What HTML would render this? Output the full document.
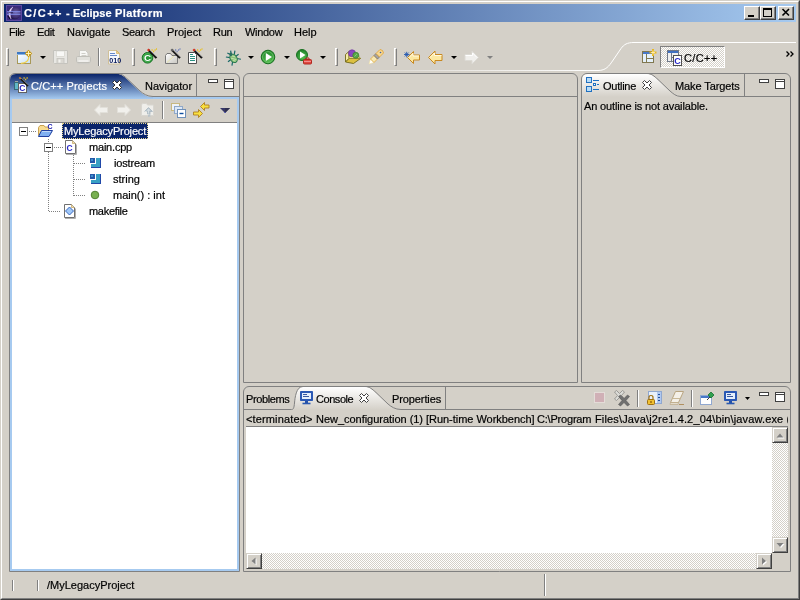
<!DOCTYPE html>
<html><head><meta charset="utf-8"><title>C/C++ - Eclipse Platform</title>
<style>
*{margin:0;padding:0;box-sizing:border-box}
html,body{width:800px;height:600px;overflow:hidden;background:#d4d0c8}
body{position:relative;font-family:"Liberation Sans",sans-serif;font-size:11px;color:#000;line-height:13px}
.a{position:absolute;white-space:nowrap}
div.a{will-change:transform;-webkit-text-stroke:.2px}
svg{position:absolute;overflow:visible}
.frame{left:0;top:0;width:800px;height:600px;border-style:solid;border-width:1px;border-color:#d4d0c8 #404040 #404040 #d4d0c8}
.frame2{left:1px;top:1px;width:798px;height:598px;border-style:solid;border-width:1px;border-color:#fff #808080 #808080 #fff}
.title{left:4px;top:4px;width:792px;height:18px;background:linear-gradient(90deg,#0a246a,#a6caf0)}
.ttext{left:24px;top:6px;color:#fff;font-weight:bold;font-size:11px;letter-spacing:.45px;line-height:14px}
.wbtn{width:16px;height:14px;top:6px;background:#d4d0c8;border-style:solid;border-width:1px;border-color:#fff #404040 #404040 #fff;box-shadow:inset -1px -1px 0 #808080}
.menu{top:26px;line-height:13px}
.sep{width:2px;height:18px;top:48px;border-left:1px solid #fff;border-right:1px solid #808080}
.hand{width:3px;height:18px;top:48px;border-style:solid;border-width:1px;border-color:#fff #808080 #808080 #fff}
.panel{border:1px solid #808080;border-radius:6px 6px 0 0}
.dd{width:0;height:0;border-style:solid;border-width:3px 3px 0 3px;border-color:#000 transparent transparent transparent;top:56px}
.sbtrack{background-color:#fff;background-image:conic-gradient(#d4d0c8 25%,#fff 0 50%,#d4d0c8 0 75%,#fff 0);background-size:2px 2px}
.sbbtn{width:16px;height:16px;background:#d4d0c8;border-style:solid;border-width:1px;border-color:#d4d0c8 #404040 #404040 #d4d0c8;box-shadow:inset 1px 1px 0 #fff,inset -1px -1px 0 #808080}
</style></head><body>
<div class="a frame"></div><div class="a frame2"></div>
<div class="a title"></div>
<div class="a ttext" style="letter-spacing:1.4px">C/C++</div><div class="a ttext" style="left:65.500px">-</div><div class="a ttext" style="left:72.500px;letter-spacing:0">Eclipse</div><div class="a ttext" style="left:114.500px;letter-spacing:.4px">Platform</div>
<div class="a wbtn" style="left:744px"></div>
<div class="a wbtn" style="left:760px"></div>
<div class="a wbtn" style="left:778px"></div>
<div class="a menu" style="left:9.300px;letter-spacing:-.5px">File</div>
<div class="a menu" style="left:36.800px;letter-spacing:-.4px">Edit</div>
<div class="a menu" style="left:67px">Navigate</div>
<div class="a menu" style="left:122px;letter-spacing:-.35px">Search</div>
<div class="a menu" style="left:167px">Project</div>
<div class="a menu" style="left:213px;letter-spacing:-.3px">Run</div>
<div class="a menu" style="left:245px;letter-spacing:-.3px">Window</div>
<div class="a menu" style="left:294px">Help</div>
<svg style="left:6px;top:5px" width="16" height="16" viewBox="0 0 16 16"><defs><radialGradient id="ec" cx=".6" cy=".45" r=".6"><stop offset="0" stop-color="#6c5c9c"/><stop offset=".7" stop-color="#3c2c70"/><stop offset="1" stop-color="#181038"/></radialGradient></defs><rect width="16" height="16" fill="#3a2a7c"/><rect x=".5" y=".5" width="15" height="15" fill="none" stroke="#5a48a0"/><circle cx="8.500" cy="8" r="6.300" fill="url(#ec)"/><path d="M7 2C2.500 4 1.500 10.500 5 14C3.800 10 4.200 5 7 2z" fill="#f4e4ff" stroke="#e0c8f8" stroke-width=".5"/><path d="M2 11l2 3" stroke="#100828" stroke-width="1.200"/><path d="M1 6.800h13.500M1 9.200h13.500" stroke="#8898f8" stroke-width="1"/><path d="M3 7.700h4" stroke="#201848" stroke-width=".8"/></svg>
<svg style="left:740px;top:4px" width="60" height="18" viewBox="740 4 60 18"><rect x="748" y="15" width="6" height="2" fill="#000"/><rect x="763.500" y="9" width="8" height="7.500" fill="none" stroke="#000"/><rect x="763" y="8" width="9" height="2" fill="#000"/><path d="M782.500 9l6.500 6.500M789 9l-6.500 6.500" stroke="#000" stroke-width="1.600"/></svg>
<!--perspective bar-->
<svg style="left:240px;top:40px" width="560" height="34" viewBox="240 40 560 34"><defs><linearGradient id="fade" x1="320" y1="0" x2="600" y2="0" gradientUnits="userSpaceOnUse"><stop offset="0" stop-color="#d4d0c8"/><stop offset="1" stop-color="#fff"/></linearGradient></defs>
<rect x="320" y="70" width="279" height="1" fill="url(#fade)"/>
<path d="M598 70.500C606 70.500 609 66 612.500 61L621 48.500C624 44.500 627 42.500 634 42.500H796" fill="none" stroke="#fff" stroke-width="1"/>
<rect x="660" y="46" width="65" height="22" fill="#fff"/>
<path d="M786.500 51.500l2.500 2.500-2.500 2.500M790.500 51.500l2.500 2.500-2.500 2.500" fill="none" stroke="#000" stroke-width="1.300"/>
</svg>
<div class="a sbtrack" style="left:660px;top:46px;width:65px;height:22px;border-style:solid;border-width:1px;border-color:#808080 #fff #fff #808080"></div>
<svg style="left:641px;top:49px" width="16" height="16" viewBox="0 0 16 16"><rect x="1.500" y="2.500" width="11" height="11" fill="#e4f0fa" stroke="#807850"/><rect x="2" y="3" width="10" height="2" fill="#4878c8"/><path d="M5.500 5v8M5.500 9.500h7" stroke="#807850"/><path d="M12 0v7M8.500 3.500h7" stroke="#e8b820" stroke-width="2"/><path d="M12 1.500v4M10 3.500h4" stroke="#fff4c0" stroke-width=".8"/></svg>
<svg style="left:666px;top:49px" width="16" height="16" viewBox="0 0 16 16"><rect x="1.500" y="1.500" width="11" height="11" fill="#f0f0f0" stroke="#707888"/><rect x="2" y="2" width="10" height="2" fill="#4070c0"/><path d="M5.500 4v8M5.500 8.500h7" stroke="#707888"/><rect x="7.500" y="6.500" width="8" height="10" fill="#fff" stroke="#505050"/><text x="8.300" y="14.800" font-family="Liberation Sans,sans-serif" font-size="9" font-weight="bold" fill="#2828c8">C</text></svg>
<div class="a" style="left:683.500px;top:52px;letter-spacing:.35px">C/C++</div>

<div class="a hand" style="left:6px"></div>
<svg style="left:17px;top:49px" width="16" height="16" viewBox="0 0 16 16"><defs><linearGradient id="nw" x1="0" y1="0" x2="1" y2="1"><stop offset="0" stop-color="#fff"/><stop offset="1" stop-color="#c4e0f8"/></linearGradient></defs><rect x=".5" y="5.500" width="13" height="9" fill="url(#nw)" stroke="#a89858"/><rect x="0" y="3" width="14" height="3" fill="#3c78c4"/><path d="M0 5.500h9" stroke="#8ab4e4"/><path d="M4 14.300q7.500 0 8-7" fill="none" stroke="#f4d048" stroke-width="1.200"/><path d="M11.500 .8l3.700 3.700-3.700 3.700-3.700-3.700z" fill="#c89818"/><path d="M11.500 2v5M9 4.500h5" stroke="#fff8c8" stroke-width=".9"/></svg>
<div class="a dd" style="left:40px"></div>
<svg style="left:53px;top:49px" width="16" height="16" viewBox="0 0 16 16"><path d="M.5 1.500h14v13h-13l-1-1z" fill="#e8e7e3" stroke="#c4c3bd"/><rect x="3.500" y="2" width="8" height="5.500" fill="#f8f8f6" stroke="#d0cfc9" stroke-width=".6"/><rect x="4" y="9.500" width="7" height="5" fill="#dad8d2" stroke="#c4c3bd" stroke-width=".8"/><rect x="5.500" y="10.500" width="2" height="3" fill="#f4f3f0"/></svg>
<svg style="left:76px;top:49px" width="16" height="16" viewBox="0 0 16 16"><path d="M3.500 7.500v-6h6l2.500 2.500v3.500" fill="#f8f8f6" stroke="#cccbc5"/><path d="M5.500 4.500h4M5.500 6.500h5" stroke="#d0cfc9"/><rect x=".5" y="7.500" width="14" height="6" rx="1.200" fill="#e2e1dc" stroke="#c0bfb9"/><rect x="2.500" y="11" width="10" height="2" fill="#f0efec"/><path d="M1.500 14.700h12" stroke="#cccbc5"/></svg>
<div class="a" style="left:98px;top:48px;width:2px;height:18px;border-left:1px solid #808080;border-right:1px solid #fff"></div>
<svg style="left:106px;top:49px" width="16" height="16" viewBox="0 0 16 16"><path d="M2.500 1.500h8l3 3v10.500h-11z" fill="#f6f8fc" stroke="#d0c098"/><path d="M10.500 1.500v3h3z" fill="#ecd090" stroke="#d0a850" stroke-width=".6"/><path d="M4 4.500h5M4 6.500h7" stroke="#6888c8" stroke-width="1.100"/><text x="3.200" y="13.600" font-family="Liberation Sans,sans-serif" font-size="7.200" font-weight="bold" fill="#0a1a5a">010</text></svg>
<div class="a hand" style="left:132px"></div>
<svg style="left:141px;top:49px" width="16" height="16" viewBox="0 0 16 16"><circle cx="6.500" cy="8.800" r="5.300" fill="#2a9a3a" stroke="#157020"/><circle cx="6.500" cy="8.800" r="4.200" fill="none" stroke="#58b860" stroke-width=".8"/><text x="3" y="12.300" font-family="Liberation Sans,sans-serif" font-size="9.800" font-weight="bold" fill="#fff">C</text><path d="M7.500 1l8 8" stroke="#101010" stroke-width="2.200"/><path d="M8.600 .8l7 7" stroke="#e8e8e8" stroke-width=".6"/><path d="M6.800 .3l1.500 1.500" stroke="#d83020" stroke-width="2.200"/><path d="M10.500 1h1.200M12 2.500h1.200M13.500 1h1.200M15 0h1" stroke="#e8c020" stroke-width="1.300"/></svg>
<svg style="left:165px;top:49px" width="16" height="16" viewBox="0 0 16 16"><defs><linearGradient id="fg" x1="0" y1="0" x2="1" y2="1"><stop offset="0" stop-color="#fff"/><stop offset="1" stop-color="#c8c6c0"/></linearGradient></defs><path d="M.5 14.500v-8l1.500-2h3.500l1.500 2h5.500v8z" fill="url(#fg)" stroke="#787878"/><path d="M2 13.500l7-6.500" stroke="#e8e4a8" stroke-width="1"/><path d="M7 1l8 8" stroke="#181818" stroke-width="2.200"/><path d="M8.100 .8l7 7" stroke="#d8d8d8" stroke-width=".6"/><path d="M6.300 .3l1.500 1.500" stroke="#606060" stroke-width="2.200"/><path d="M10 1h1.200M11.500 2.500h1.200M13 1h1.200M14.500 0h1" stroke="#7080b8" stroke-width="1.300"/></svg>
<svg style="left:188px;top:49px" width="16" height="16" viewBox="0 0 16 16"><path d="M.5 3.500h6l2 2v9h-8z" fill="#fff" stroke="#505050"/><path d="M2 7.500h5M2 9.500h5M2 11.500h5M2 5.500h3" stroke="#2a9080"/><path d="M6 1l8 8" stroke="#101010" stroke-width="2.200"/><path d="M7.100 .8l7 7" stroke="#e8e8e8" stroke-width=".6"/><path d="M5.300 .3l1.500 1.500" stroke="#d83020" stroke-width="2.200"/><path d="M9 1h1.200M10.500 2.500h1.200M12 1h1.200M13.500 0h1" stroke="#e8c020" stroke-width="1.300"/></svg>
<div class="a hand" style="left:214px"></div>
<svg style="left:225px;top:49px" width="16" height="16" viewBox="0 0 16 16"><g transform="rotate(-35 8 8.500)"><path d="M2.500 4l3 3M13.500 4l-3 3M1.500 9h3M14.500 9h-3M2.500 14.500l3-3M13.500 14.500l-3-3M6 1.500l1.200 2.500M10 1.500l-1.200 2.500" stroke="#186868" stroke-width="1.200" fill="none"/><ellipse cx="8" cy="9.500" rx="3.300" ry="4.500" fill="#8cc078" stroke="#2a7a50"/><path d="M6 8l3.500 4M6.500 11l1.500 2M8 6.500l2 2.500" stroke="#c8e8b8" stroke-width=".8"/><circle cx="8" cy="4.700" r="1.700" fill="#2a7060"/></g></svg>
<div class="a dd" style="left:248px"></div>
<svg style="left:260px;top:49px" width="16" height="16" viewBox="0 0 16 16"><defs><radialGradient id="rg" cx=".55" cy=".7" r=".7"><stop offset="0" stop-color="#58c050"/><stop offset="1" stop-color="#1a8028"/></radialGradient></defs><circle cx="8" cy="8" r="6.800" fill="url(#rg)" stroke="#187020"/><circle cx="8" cy="8" r="5.400" fill="none" stroke="#80d078" stroke-width=".7"/><path d="M5.800 4v8l6.200-4z" fill="#fff"/></svg>
<div class="a dd" style="left:284px"></div>
<svg style="left:296px;top:49px" width="16" height="16" viewBox="0 0 16 16"><circle cx="6" cy="6" r="5.500" fill="url(#rg)" stroke="#187020"/><path d="M4 2.500v7l5.500-3.500z" fill="#fff"/><rect x="7.500" y="10.500" width="8" height="4.500" rx="1" fill="#e04840" stroke="#b02820"/><path d="M10 10.500v-1.500h3v1.500" fill="none" stroke="#b02820"/><path d="M8 12.500h7" stroke="#f8a0a0" stroke-width=".8"/></svg>
<div class="a dd" style="left:320px"></div>
<div class="a hand" style="left:335px"></div>
<svg style="left:345px;top:49px" width="16" height="16" viewBox="0 0 16 16"><path d="M.5 5.500L4 2.500V9.500L.5 13z" fill="#f6eca8" stroke="#706818" stroke-width=".9"/><path d="M4 9.500H15.500L8.500 14.500L.5 13z" fill="#dcc040" stroke="#706818" stroke-width=".9"/><path d="M4 9.500V5h8l3.500 4.500z" fill="#f0e080" stroke="#8a8028" stroke-width=".7"/><circle cx="7" cy="4.300" r="3.500" fill="#8a48c0" stroke="#6c30a0" stroke-width=".7"/><circle cx="10.800" cy="6.300" r="3" fill="#58a848" stroke="#388028" stroke-width=".7"/><path d="M9.500 7.500l2.500-2.500" stroke="#90d080" stroke-width=".8"/></svg>
<svg style="left:368px;top:49px" width="16" height="16" viewBox="0 0 16 16"><path d="M1 15l1.500-5 3.500 3.500z" fill="#fff" stroke="#f0e0a0" stroke-width=".6"/><path d="M2.500 10l3.500 3.500 3.500-3.500-3.500-3.500z" fill="#f8e8b0" stroke="#e0a840" stroke-width=".8"/><path d="M6 6.500l3.500 3.500 2-2-3.500-3.500z" fill="#a8a4a0" stroke="#787470" stroke-width=".8"/><path d="M8 4.500l3.500 3.500 4-4-1-2.500-2.500-1z" fill="#f8d890" stroke="#e0a030" stroke-width=".8"/><circle cx="12.500" cy="3.500" r=".8" fill="#4060a0"/></svg>
<div class="a hand" style="left:394px"></div>
<svg style="left:404px;top:49px" width="16" height="16" viewBox="0 0 16 16"><path d="M3.500 8.500l6-6v3.500h6v5h-6v3.500z" fill="#fce8a0" stroke="#c88820"/><path d="M5 8.500l4-4v2.500h6" fill="none" stroke="#fff8e0"/><path d="M0 5.500h5.500M2.700 2.800v5.500M.8 3.600l3.800 3.800M4.600 3.600l-3.800 3.800" stroke="#2458b0" stroke-width=".9"/></svg>
<svg style="left:428px;top:49px" width="16" height="16" viewBox="0 0 16 16"><path d="M.500 8.500l6.500-6.500v3.500h7v6h-7v3.500z" fill="#fce8a0" stroke="#c88820"/><path d="M2 8.500l4.500-4.500v2.500h7" fill="none" stroke="#fff8e0"/></svg>
<div class="a dd" style="left:451px"></div>
<svg style="left:464px;top:49px" width="16" height="16" viewBox="0 0 16 16"><path d="M14.500 8.500l-6.500-6.500v3.500h-7v6h7v3.500z" fill="#f0efec" stroke="#dcdad4"/><path d="M13 8.500l-4.500-4.500v2.500h-7" fill="none" stroke="#fff"/></svg>
<div class="a dd" style="left:487px;border-top-color:#808080"></div>
<div class="a dd" style="left:488px;top:57px;border-top-color:#fff;z-index:-1"></div>

<div class="a panel" style="left:9px;top:73px;width:231px;height:499px"></div>
<svg style="left:0;top:0" width="260" height="130" viewBox="0 0 260 130">
<defs><linearGradient id="gb" x1="0" y1="0" x2="0" y2="1"><stop offset="0" stop-color="#0a246a"/><stop offset="1" stop-color="#a6caf0"/></linearGradient></defs>
<path d="M10 99V80q0-6 6-6H117C121.500 74 124 76.500 128 80L140 91.500C143 94 147 97 153 97H239V99z" fill="url(#gb)"/>
<path d="M118 74C121.500 74 124 76.500 128 80L140 91.500C143 94 147 97 153 97H232V74z" fill="#d4d0c8"/>
<path d="M117 73.500C121.500 73.500 124 76 128 79.500L140 91C143 93.500 147 96.500 153 96.500H239" fill="none" stroke="#808080"/>
<rect x="153" y="97" width="86" height="2" fill="#a6caf0"/>
<path d="M196.500 74v22" stroke="#808080"/>
<rect x="208.500" y="79.500" width="9" height="3" fill="#fff" stroke="#404040"/>
<rect x="224.500" y="79.500" width="9" height="9" fill="#fff" stroke="#404040"/><path d="M224 81.500h10" stroke="#404040"/>
<path transform="translate(112 80)" d="M.5 2.500L2.500 .5L5 3L7.500 .5L9.500 2.500L7 5L9.500 7.500L7.500 9.500L5 7L2.500 9.500L.5 7.500L3 5z" fill="#fff" stroke="#303030"/>
</svg>
<div class="a" style="left:10px;top:99px;width:2px;height:472px;background:#a6caf0"></div>
<div class="a" style="left:237px;top:99px;width:2px;height:472px;background:#a6caf0"></div>
<div class="a" style="left:10px;top:569px;width:229px;height:2px;background:#a6caf0"></div>
<div class="a" style="left:12px;top:122px;width:225px;height:1px;background:#808080"></div>
<div class="a" style="left:12px;top:123px;width:225px;height:446px;background:#fff"></div>
<!--tab icon-->
<svg style="left:13px;top:77px" width="16" height="16" viewBox="0 0 16 16"><rect x="1.500" y="5.500" width="4" height="7" fill="#60b8c8" stroke="#386878"/><path d="M2 4.500h3" stroke="#a0a8a0"/><rect x="5.500" y="6.500" width="8" height="9" fill="#fff" stroke="#606060"/><text x="6.300" y="14" font-family="Liberation Sans,sans-serif" font-size="8.500" font-weight="bold" fill="#2828c0">C</text><path d="M7 1l8 8" stroke="#181818" stroke-width="1.800"/><path d="M8 .8l7 7" stroke="#d0d0d0" stroke-width=".5"/><path d="M6.300 .3l1.500 1.500" stroke="#c08040" stroke-width="1.800"/><path d="M10.500 1h1.200M12 2.500h1.200M13.500 1h1.200" stroke="#e8c020" stroke-width="1.300"/></svg>
<div class="a" style="left:31px;top:80px;color:#fff;letter-spacing:.1px">C/C++ Projects</div>
<div class="a" style="left:145px;top:80px">Navigator</div>
<!--view toolbar-->
<svg style="left:92px;top:102px" width="16" height="16" viewBox="0 0 16 16"><path d="M2.500 8l5.500-5.500v3h7.500v5h-7.500v3z" fill="#f1f0ec" stroke="#e2e0da"/></svg>
<svg style="left:116px;top:102px" width="16" height="16" viewBox="0 0 16 16"><path d="M14.500 8l-5.500-5.500v3h-7.500v5h7.500v3z" fill="#f1f0ec" stroke="#e2e0da"/></svg>
<svg style="left:140px;top:102px" width="16" height="16" viewBox="0 0 16 16"><path d="M1.500 13.500v-10.500l1-1.500h4l1 1.500h6v10.500z" fill="#efeeea" stroke="#d8d6d0"/><path d="M4.500 9.500l4-4 4 4h-2.500v2.500q0 2-2 2h2.500" fill="none" stroke="#b4c0c8" stroke-width="1"/><path d="M5.500 9l3-3 3 3h-2v3h-2v-3z" fill="#d4dde2" stroke="#aab8c0" stroke-width=".8"/></svg>
<div class="a" style="left:162px;top:101px;width:2px;height:18px;border-left:1px solid #808080;border-right:1px solid #fff"></div>
<svg style="left:171px;top:102px" width="16" height="16" viewBox="0 0 16 16"><rect x=".5" y="1.500" width="8" height="7" fill="#eef2f8" stroke="#c8b880"/><rect x="3.500" y="4.500" width="8" height="7" fill="#dce8f8" stroke="#90a8c8"/><rect x="6.500" y="7.500" width="8" height="8" fill="#fff" stroke="#7090b8"/><path d="M8.500 11.500h4" stroke="#1050a0" stroke-width="1.400"/></svg>
<svg style="left:193px;top:102px" width="16" height="16" viewBox="0 0 16 16"><path d="M7.500 4.500l4-4v2.500h4.500v3h-4.500v2.500z" fill="#f8e040" stroke="#b08020" stroke-width=".9"/><path d="M9.500 11.500l-4-4v2.500h-5v3h5v2.500z" fill="#f8e040" stroke="#b08020" stroke-width=".9"/></svg>
<svg style="left:220px;top:108px" width="10" height="5" viewBox="0 0 10 5"><path d="M0 0h10l-5 5z" fill="#383868"/><path d="M5 0h5l-5 5z" fill="#303050"/><path d="M4 4l1 1 1-1z" fill="#4048c0"/></svg>
<!--tree-->
<svg style="left:0;top:120px" width="240" height="110" viewBox="0 120 240 110" shape-rendering="crispEdges">
<g stroke="#808080" stroke-dasharray="1 1" fill="none"><path d="M29 131.500h8"/><path d="M48.500 139v4M48.500 152v60"/><path d="M54 147.500h10"/><path d="M73.500 155v41"/><path d="M74 163.500h12M74 179.500h12M74 195.500h12"/><path d="M49 211.500h12"/></g>
<rect x="19.500" y="127.500" width="8" height="8" fill="#fff" stroke="#808080"/><path d="M21 131.500h5" stroke="#000"/>
<rect x="44.500" y="143.500" width="8" height="8" fill="#fff" stroke="#808080"/><path d="M46 147.500h5" stroke="#000"/>
</svg>
<div class="a" style="left:62px;top:123px;width:86px;height:16px;background:#0a246a;border:1px dotted #e8d890"></div>
<div class="a" style="left:64px;top:125px;color:#fff;letter-spacing:-.15px">MyLegacyProject</div>
<div class="a" style="left:89px;top:141px;letter-spacing:-.2px">main.cpp</div>
<div class="a" style="left:113.500px;top:157px;letter-spacing:-.15px">iostream</div>
<div class="a" style="left:113px;top:173px">string</div>
<div class="a" style="left:113px;top:189px">main() : int</div>
<div class="a" style="left:89px;top:205px;letter-spacing:-.3px">makefile</div>
<!--tree icons-->
<svg style="left:37px;top:123px" width="16" height="16" viewBox="0 0 16 16"><path d="M1.500 12.500v-8l1.500-2h4l1 1.500h3.500v3" fill="#f8dc90" stroke="#c8a050"/><path d="M1.500 13.500l3-6h11l-3.500 6z" fill="#80b0f0" stroke="#2040a0"/><path d="M5 8.500h9" stroke="#c0d8f8"/><text x="10.500" y="5.800" font-family="Liberation Sans,sans-serif" font-size="7" font-weight="bold" fill="#2020b0">C</text></svg>
<svg style="left:63px;top:139px" width="16" height="16" viewBox="0 0 16 16"><path d="M2.500 1.500h7l3 3v10h-10z" fill="#fff" stroke="#707070"/><path d="M9.500 1.500v3h3" fill="#f0e0b0" stroke="#c0a060" stroke-width=".7"/><path d="M3 15.500h10.500v-10" fill="none" stroke="#b0b0b0"/><text x="3.600" y="12.300" font-family="Liberation Sans,sans-serif" font-size="8.500" font-weight="bold" fill="#2828c8">C</text></svg>
<svg style="left:88px;top:155px" width="16" height="16" viewBox="0 0 16 16"><g shape-rendering="crispEdges"><path d="M8 3h5v10h-10v-4h5z" fill="#38a0c4"/><path d="M12.500 3v9.500h-9.500" fill="none" stroke="#2048a8"/><rect x="2" y="3" width="5" height="5" fill="#2458a8"/><rect x="3" y="4" width="2" height="2" fill="#3c90cc"/></g></svg>
<svg style="left:88px;top:171px" width="16" height="16" viewBox="0 0 16 16"><g shape-rendering="crispEdges"><path d="M8 3h5v10h-10v-4h5z" fill="#38a0c4"/><path d="M12.500 3v9.500h-9.500" fill="none" stroke="#2048a8"/><rect x="2" y="3" width="5" height="5" fill="#2458a8"/><rect x="3" y="4" width="2" height="2" fill="#3c90cc"/></g></svg>
<svg style="left:87px;top:187px" width="16" height="16" viewBox="0 0 16 16"><circle cx="8" cy="8" r="3.800" fill="#78b050" stroke="#508030"/></svg>
<svg style="left:62px;top:203px" width="16" height="16" viewBox="0 0 16 16"><path d="M2.500 1.500h7l3 3v10h-10z" fill="#fff" stroke="#707070"/><path d="M9.500 1.500v3h3" fill="#f0e0b0" stroke="#c0a060" stroke-width=".7"/><path d="M3 15.500h10.500v-10" fill="none" stroke="#b0b0b0"/><path d="M7.500 4l4 4-4 4-4-4z" fill="#a0c8f8" stroke="#3868c0"/></svg>

<div class="a panel" style="left:243px;top:73px;width:335px;height:310px"></div>
<div class="a" style="left:244px;top:96px;width:333px;height:1px;background:#808080"></div>

<div class="a panel" style="left:581px;top:73px;width:210px;height:310px"></div>
<svg style="left:560px;top:60px" width="240" height="50" viewBox="560 60 240 50">
<defs><linearGradient id="gw" x1="0" y1="0" x2="0" y2="1"><stop offset="0" stop-color="#fff"/><stop offset="1" stop-color="#d4d0c8"/></linearGradient></defs>
<path d="M582 97V80q0-6 6-6H647C651.500 74 654 76.500 658 80L670 91.500C673 94 676 97 681 97z" fill="url(#gw)"/>
<path d="M647 73.500C651.500 73.500 654 76 658 79.500L670 91C673 93.500 676 96.500 681 96.500H790" fill="none" stroke="#808080"/>
<path d="M744.500 74v22" stroke="#808080"/>
<rect x="759.500" y="79.500" width="9" height="3" fill="#fff" stroke="#404040"/>
<rect x="775.500" y="79.500" width="9" height="9" fill="#fff" stroke="#404040"/><path d="M775 81.500h10" stroke="#404040"/>
<path transform="translate(642 80)" d="M.5 2.500L2.500 .5L5 3L7.500 .5L9.500 2.500L7 5L9.500 7.500L7.500 9.500L5 7L2.500 9.500L.5 7.500L3 5z" fill="#fff" stroke="#404040"/>
</svg>
<svg style="left:586px;top:77px" width="16" height="16" viewBox="0 0 16 16"><rect x=".5" y=".5" width="5" height="5" fill="#b8dcf8" stroke="#2070c0"/><rect x=".5" y="9.500" width="5" height="5" fill="#b8dcf8" stroke="#2070c0"/><path d="M7 3.500h6M7 12.500h6M11 7.500h2" stroke="#2070c0"/><rect x="7.500" y="6.500" width="2" height="2" fill="#fff" stroke="#2070c0"/></svg>
<div class="a" style="left:603px;top:80px;letter-spacing:-.25px">Outline</div>
<div class="a" style="left:675px;top:80px;letter-spacing:-.1px">Make Targets</div>
<div class="a" style="left:584px;top:100px;letter-spacing:-.14px">An outline is not available.</div>

<div class="a panel" style="left:243px;top:386px;width:548px;height:186px"></div>
<svg style="left:240px;top:380px" width="560" height="40" viewBox="240 380 560 40"><defs><linearGradient id="gwb" x1="0" y1="387" x2="0" y2="410" gradientUnits="userSpaceOnUse"><stop offset="0" stop-color="#fff"/><stop offset="1" stop-color="#d4d0c8"/></linearGradient></defs>
<path d="M294 410L294.500 403C295 398 296 387 303 387H365C369.500 387 372 389.500 376 393L388 404.500C391 407 395 410 401 410z" fill="url(#gwb)"/>
<path d="M244 409.500H291.500C293.500 409.500 294 408 294.500 403C295 398 296 386.500 303 386.500H365C369.500 386.500 372 389 376 392.500L388 404C391 406.500 395 409.500 401 409.500H790" fill="none" stroke="#808080"/>
<path d="M445.500 387v22" stroke="#808080"/>
<rect x="759.500" y="392.500" width="9" height="3" fill="#fff" stroke="#404040"/>
<rect x="775.500" y="392.500" width="9" height="9" fill="#fff" stroke="#404040"/><path d="M775 394.500h10" stroke="#404040"/>
<path transform="translate(359 393)" d="M.5 2.500L2.500 .5L5 3L7.500 .5L9.500 2.500L7 5L9.500 7.500L7.500 9.500L5 7L2.500 9.500L.5 7.500L3 5z" fill="#fff" stroke="#404040"/>
<path d="M637.500 390v17" stroke="#808080"/><path d="M638.500 390v17" stroke="#fff"/>
<path d="M691.500 390v17" stroke="#808080"/><path d="M692.500 390v17" stroke="#fff"/>
<path d="M745 397h5l-2.500 3z" fill="#000"/>
</svg>
<div class="a" style="left:246px;top:393px;letter-spacing:-.4px">Problems</div>
<div class="a" style="left:316px;top:393px;letter-spacing:-.45px">Console</div>
<div class="a" style="left:392px;top:393px;letter-spacing:-.1px">Properties</div>
<svg style="left:299px;top:390px" width="16" height="16" viewBox="0 0 16 16"><rect x="1" y="1" width="13" height="10" rx=".8" fill="#2a58b4"/><rect x="3" y="3" width="9" height="6" fill="#e4eefc"/><path d="M4 4.500h4M4 6.500h6" stroke="#3858a0"/><path d="M6 11h3v2h-3z" fill="#2450a8"/><path d="M3.500 13.500h8" stroke="#2858b0" stroke-width="1.600"/></svg>
<!--console toolbar-->
<svg style="left:592px;top:390px" width="16" height="16" viewBox="0 0 16 16"><rect x="2.500" y="2.500" width="10" height="10" fill="#d0b0b6" stroke="#e4dcd8"/></svg>
<svg style="left:614px;top:390px" width="16" height="16" viewBox="0 0 16 16"><path d="M.5 2l2-1.500 3 3 3-3 2 1.500-3 3.500 3 3.500-2 1.500-3-3-3 3-2-1.500 3-3.500z" fill="#dcdcd8" stroke="#8c8c88" stroke-width=".8"/><path d="M4.500 6.500l2-1.500 3.500 3.500 3.500-3.500 2 1.500-3.500 4 3.500 4-2 1.500-3.500-3.500-3.500 3.500-2-1.500 3.500-4z" fill="#707070" stroke="#585858" stroke-width=".6"/></svg>
<svg style="left:646px;top:390px" width="16" height="16" viewBox="0 0 16 16"><rect x="2.500" y="1.500" width="13" height="12" fill="#e8f0fc" stroke="#90a8d0"/><rect x="11" y="2" width="4" height="11" fill="#b0c8f0"/><path d="M12 4.500h2M12 7.500h2M12 10.500h2" stroke="#2050a0"/><rect x="1.500" y="9.500" width="7" height="5" rx="1" fill="#f0c030" stroke="#a07010"/><path d="M3 9.500v-2q0-2 2-2t2 2v2" fill="none" stroke="#a07010" stroke-width="1.200"/><rect x="4.500" y="11" width="1" height="2" fill="#704000"/></svg>
<svg style="left:669px;top:390px" width="16" height="16" viewBox="0 0 16 16"><path d="M6.500 1.500h8l-5 11h-8z" fill="#f4f0e8" stroke="#b8a480"/><path d="M3.800 8.500h7.500" stroke="#c8b898"/><path d="M1.500 12.500h8l-.5 2h-8z" fill="#e4dccc" stroke="#b8a480" stroke-width=".6"/><path d="M10 14.500h5" stroke="#b09060"/></svg>
<svg style="left:699px;top:390px" width="16" height="16" viewBox="0 0 16 16"><rect x="1.500" y="5.500" width="11" height="9" fill="#fff" stroke="#90a8d0"/><rect x="2" y="6" width="10" height="2" fill="#4878c8"/><path d="M8 10l3-3" stroke="#404040"/><path d="M9 5l3-3 3 3-3 3z" fill="#30a050" stroke="#187030" stroke-width=".8"/></svg>
<svg style="left:723px;top:390px" width="16" height="16" viewBox="0 0 16 16"><rect x="1" y="1" width="13" height="10" rx=".8" fill="#2a58b4"/><rect x="3" y="3" width="9" height="6" fill="#e4eefc"/><path d="M4 4.500h4M4 6.500h6" stroke="#3858a0"/><path d="M6 11h3v2h-3z" fill="#2450a8"/><path d="M3.500 13.500h8" stroke="#2858b0" stroke-width="1.600"/></svg>
<!--description-->
<div class="a" style="left:246px;top:413px;letter-spacing:.14px">&lt;terminated&gt;</div>
<div class="a" style="left:316.300px;top:413px;letter-spacing:-.03px">New_configuration (1) [Run-time Workbench]</div>
<div class="a" style="left:537.300px;top:413px;letter-spacing:-.2px">C:\Program</div>
<div class="a" style="left:595px;top:413px;width:193px;overflow:hidden;letter-spacing:.15px">Files\Java\j2re1.4.2_04\bin\javaw.exe (</div>
<div class="a" style="left:246px;top:426px;width:542px;height:1px;background:#808080"></div>
<div class="a" style="left:246px;top:427px;width:526px;height:126px;background:#fff"></div>
<div class="a sbtrack" style="left:772px;top:427px;width:16px;height:126px"></div>
<div class="a sbtrack" style="left:246px;top:553px;width:526px;height:16px"></div>
<div class="a sbbtn" style="left:772px;top:427px"></div>
<div class="a sbbtn" style="left:772px;top:537px"></div>
<div class="a sbbtn" style="left:246px;top:553px"></div>
<div class="a sbbtn" style="left:756px;top:553px"></div>
<svg style="left:240px;top:420px" width="560" height="160" viewBox="240 420 560 160"><g fill="#fff"><path d="M777.500 438.500l3.500-4 3.500 4z"/><path d="M777.500 544l3.500 4 3.500-4z"/><path d="M256.500 558.500l-4 3.500 4 3.500z"/><path d="M763 558.500l4 3.500-4 3.500z"/></g><g fill="#808080"><path d="M776.500 437.500l3.500-4 3.500 4z"/><path d="M776.500 543l3.500 4 3.500-4z"/><path d="M255.500 557.500l-4 3.500 4 3.500z"/><path d="M762 557.500l4 3.500-4 3.500z"/></g></svg>

<div class="a" style="left:12px;top:580px;width:2px;height:11px;border-left:1px solid #808080;border-right:1px solid #fff"></div>
<div class="a" style="left:37px;top:580px;width:2px;height:11px;border-left:1px solid #808080;border-right:1px solid #fff"></div>
<div class="a" style="left:544px;top:574px;width:2px;height:22px;border-left:1px solid #808080;border-right:1px solid #fff"></div>
<div class="a" style="left:47px;top:579px">/MyLegacyProject</div>

</body></html>
